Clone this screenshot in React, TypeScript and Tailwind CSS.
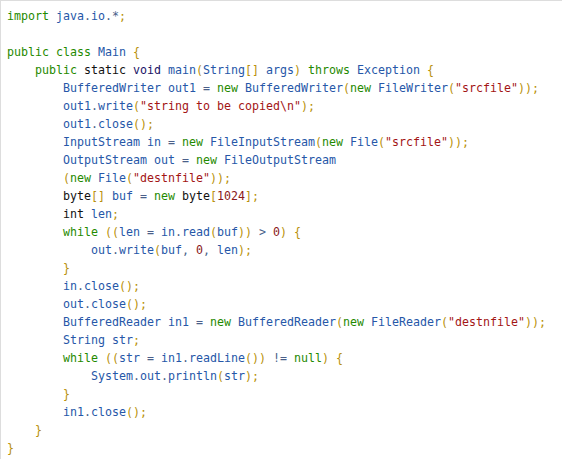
import React from "react";

const lines: string[] = [
  "import java.io.*;",
  "",
  "public class Main {",
  "    public static void main(String[] args) throws Exception {",
  "        BufferedWriter out1 = new BufferedWriter(new FileWriter(\"srcfile\"));",
  "        out1.write(\"string to be copied\\n\");",
  "        out1.close();",
  "        InputStream in = new FileInputStream(new File(\"srcfile\"));",
  "        OutputStream out = new FileOutputStream",
  "        (new File(\"destnfile\"));",
  "        byte[] buf = new byte[1024];",
  "        int len;",
  "        while ((len = in.read(buf)) > 0) {",
  "            out.write(buf, 0, len);",
  "        }",
  "        in.close();",
  "        out.close();",
  "        BufferedReader in1 = new BufferedReader(new FileReader(\"destnfile\"));",
  "        String str;",
  "        while ((str = in1.readLine()) != null) {",
  "            System.out.println(str);",
  "        }",
  "        in1.close();",
  "    }",
  "}",
];

const kwGreen = new Set(["import", "public", "class", "throws", "new", "while", "null"]);
const kwDark = new Set(["static", "int", "byte"]);
const kwVoid = new Set(["void"]);

type Tok = { t: string; c: string };

function tokenize(line: string): Tok[] {
  const out: Tok[] = [];
  let i = 0;
  while (i < line.length) {
    const ch = line[i];
    if (ch === " ") {
      let j = i;
      while (j < line.length && line[j] === " ") j++;
      out.push({ t: line.slice(i, j), c: "" });
      i = j;
    } else if (ch === '"') {
      let j = i + 1;
      while (j < line.length && line[j] !== '"') j++;
      out.push({ t: line.slice(i, j + 1), c: "text-[#a31515]" });
      i = j + 1;
    } else if (/[A-Za-z_]/.test(ch)) {
      let j = i;
      while (j < line.length && /[A-Za-z0-9_]/.test(line[j])) j++;
      const w = line.slice(i, j);
      let c = "text-[#2657a8]";
      if (kwGreen.has(w)) c = "text-[#1f8a00]";
      else if (kwDark.has(w)) c = "text-[#111111]";
      else if (kwVoid.has(w)) c = "text-[#1a1466]";
      out.push({ t: w, c });
      i = j;
    } else if (/[0-9]/.test(ch)) {
      let j = i;
      while (j < line.length && /[0-9]/.test(line[j])) j++;
      out.push({ t: line.slice(i, j), c: "text-[#8b1a1a]" });
      i = j;
    } else if ("(){}[];".includes(ch)) {
      out.push({ t: ch, c: "text-[#b8900a]" });
      i++;
    } else {
      out.push({ t: ch, c: "text-[#4a5f8a]" });
      i++;
    }
  }
  return out;
}

export default function App() {
  return (
    <div className="w-[562px] h-[459px] bg-white border-t border-l border-[#dddddd] overflow-hidden">
      <pre
        className="m-0 pt-[6px] pl-[6px] text-[11.63px] leading-[18px] whitespace-pre"
        style={{ fontFamily: '"DejaVu Sans Mono", "Liberation Mono", monospace' }}
      >
        {lines.map((l, idx) => (
          <div key={idx} className="h-[18px]">
            {tokenize(l).map((tk, k) => (
              <span key={k} className={tk.c}>
                {tk.t}
              </span>
            ))}
          </div>
        ))}
      </pre>
    </div>
  );
}
